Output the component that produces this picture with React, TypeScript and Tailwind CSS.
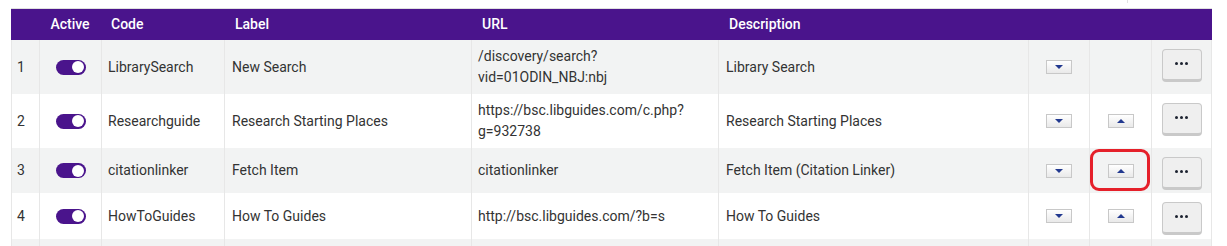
import React from "react";

type Row = {
  n?: number;
  code: string;
  label: string;
  url: string[];
  description: string;
  height: string;
  striped: boolean;
  showDown: boolean;
  showUp: boolean;
  marked?: boolean;
};

const rows: Row[] = [
  {
    n: 1,
    code: "LibrarySearch",
    label: "New Search",
    url: ["/discovery/search?", "vid=01ODIN_NBJ:nbj"],
    description: "Library Search",
    height: "h-[54px]",
    striped: true,
    showDown: true,
    showUp: false
  },
  {
    n: 2,
    code: "Researchguide",
    label: "Research Starting Places",
    url: ["https://bsc.libguides.com/c.php?", "g=932738"],
    description: "Research Starting Places",
    height: "h-[54px]",
    striped: false,
    showDown: true,
    showUp: true
  },
  {
    n: 3,
    code: "citationlinker",
    label: "Fetch Item",
    url: ["citationlinker"],
    description: "Fetch Item (Citation Linker)",
    height: "h-[45px]",
    striped: true,
    showDown: true,
    showUp: true,
    marked: true
  },
  {
    n: 4,
    code: "HowToGuides",
    label: "How To Guides",
    url: ["http://bsc.libguides.com/?b=s"],
    description: "How To Guides",
    height: "h-[46px]",
    striped: false,
    showDown: true,
    showUp: true
  },
  // next row is cut off by the bottom edge, only its top few pixels show
  {
    code: "",
    label: "",
    url: [],
    description: "",
    height: "h-[45px]",
    striped: true,
    showDown: false,
    showUp: true
  }
];

const gridCols = "grid grid-cols-[28px_62px_123px_247px_247px_310px_61px_62px_61px]";
const cell = "flex items-center border-l border-[#e7e7e7]";

function Toggle() {
  return (
    <span className="flex h-[15px] w-[30px] items-center justify-end rounded-full bg-[#4a148c] pr-[2px]">
      <span className="h-[12px] w-[12px] rounded-full bg-white" />
    </span>
  );
}

function ArrowButton({ up }: { up?: boolean }) {
  return (
    <button className="flex h-[14px] w-[26px] items-center justify-center border border-[#c8c8c8] bg-gradient-to-b from-white to-[#e9e9e9]">
      {up ? (
        <span className="h-0 w-0 border-x-[4px] border-b-[4px] border-x-transparent border-b-[#22398f]" />
      ) : (
        <span className="h-0 w-0 border-x-[4px] border-t-[4px] border-x-transparent border-t-[#22398f]" />
      )}
    </button>
  );
}

function MoreButton() {
  return (
    <button className="flex h-[33px] w-[40px] items-center justify-center gap-[2px] rounded-[4px] border border-b-[3px] border-[#c9c9c9] bg-[#efefef] pb-[2px]">
      <span className="h-[3px] w-[3px] rounded-full bg-[#1c2230]" />
      <span className="h-[3px] w-[3px] rounded-full bg-[#1c2230]" />
      <span className="h-[3px] w-[3px] rounded-full bg-[#1c2230]" />
    </button>
  );
}

export default function App() {
  return (
    <div className="min-h-screen bg-white font-['Roboto',sans-serif] text-[14px] text-[#333]">
      <div className="h-[8px]">
        <div className="ml-[1127px] h-[3px] w-px bg-[#e2e2e2]" />
      </div>
      <div className="ml-[11px] w-[1201px] border-t border-[#e0e0e0]">
        <div className={`${gridCols} h-[31px] bg-[#4a148c] font-medium text-white`}>
          <div />
          <div className="flex items-center justify-center">Active</div>
          <div className="flex items-center pl-[10px]">Code</div>
          <div className="flex items-center pl-[11px]">Label</div>
          <div className="flex items-center pl-[11px]">URL</div>
          <div className="flex items-center pl-[11px]">Description</div>
          <div />
          <div />
          <div />
        </div>
        {rows.map((row, index) => (
          <div
            key={index}
            className={`${gridCols} ${row.height} ${row.striped ? "bg-[#f2f3f3]" : "bg-white"} leading-[21px]`}
          >
            <div className={`${cell} pl-[5px]`}>{row.n}</div>
            <div className={`${cell} justify-center`}>
              <Toggle />
            </div>
            <div className={`${cell} pl-[6px]`}>{row.code}</div>
            <div className={`${cell} pl-[7px]`}>{row.label}</div>
            <div className={`${cell} pl-[6px]`}>
              <div>
                {row.url.map((line) => (
                  <div key={line}>{line}</div>
                ))}
              </div>
            </div>
            <div className={`${cell} pl-[7px]`}>{row.description}</div>
            <div className={`${cell} justify-center`}>{row.showDown ? <ArrowButton /> : null}</div>
            <div className={`${cell} relative justify-center`}>
              {row.showUp ? <ArrowButton up /> : null}
              {row.marked ? (
                <span className="absolute left-0 top-[1px] h-[42px] w-[60px] rounded-[9px] border-[3px] border-[#e5202a]" />
              ) : null}
            </div>
            <div className="flex items-start justify-center border-x border-[#e7e7e7] pt-[9px]">
              <MoreButton />
            </div>
          </div>
        ))}
      </div>
    </div>
  );
}
